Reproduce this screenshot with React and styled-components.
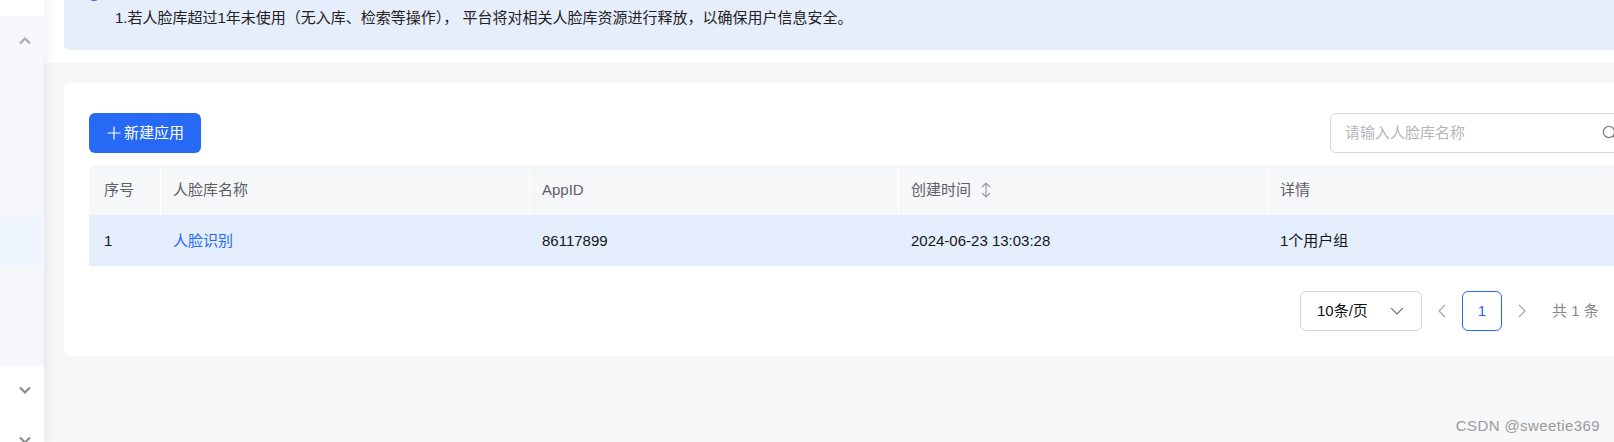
import React from "react";
import styled, { createGlobalStyle } from "styled-components";

const Global = createGlobalStyle`
  html, body { margin: 0; padding: 0; width: 1614px; height: 442px; overflow: hidden; background: #f6f7f9; }
  * { box-sizing: border-box; }
  body { font-family: "Liberation Sans", "Noto Sans CJK SC", sans-serif; font-size: 15px; line-height: 20px; color: #161616; }
`;

const Page = styled.div`
  position: relative;
  display: flex;
  width: 1614px;
  height: 442px;
  overflow: hidden;
`;
const Sidebar = styled.aside`
  width: 44px;
  flex: none;
  display: flex;
  flex-direction: column;
  background: #fff;
  box-shadow: 3px 0 12px rgba(0, 0, 0, 0.07);
  z-index: 1;
`;
const SideGroup = styled.div`
  height: 350px;
  flex: none;
  margin-top: 16px;
  background: linear-gradient(#f6f7fb 0 200px, #f0f6ff 200px 250px, #f6f7fb 250px);
  display: flex;
  justify-content: center;
  padding: 19px 0 0 5px;
`;
const SideItem = styled.div`
  height: 50px;
  display: flex;
  justify-content: center;
  padding: 18px 0 0 5px;
  flex: none;
`;
const Main = styled.main`
  flex: none;
  width: 1700px;
  display: flex;
  flex-direction: column;
`;
const TopBand = styled.div`
  background: #fff;
  padding: 0 0 13px 20px;
`;
const Alert = styled.div`
  height: 50px;
  background: #e6eefc;
  border-radius: 0 0 5px 5px;
  padding-left: 23px;
  display: flex;
  color: #222;
  line-height: 36px;
  overflow: hidden;
`;
const AlertDot = styled.span`
  flex: none;
  width: 14px;
  height: 14px;
  border-radius: 50%;
  background: #2569f5;
  margin: -13px 14px 0 0;
`;
const Card = styled.section`
  margin: 20px 0 0 20px;
  height: 273px;
  background: #fff;
  border-radius: 6px;
  padding: 30px 0 0 25px;
`;
const Toolbar = styled.div`
  display: flex;
  justify-content: space-between;
  height: 40px;
  margin-bottom: 12px;
  width: 1546px;
`;
const AddButton = styled.button`
  width: 112px;
  height: 40px;
  border: 0;
  border-radius: 6px;
  background: #2569f5;
  color: #fff;
  font: inherit;
  display: flex;
  align-items: center;
  justify-content: center;
  gap: 3px;
  padding: 0 0 0 1px;
`;
const Search = styled.div`
  width: 305px;
  height: 40px;
  border: 1px solid #d4d5d9;
  border-radius: 6px;
  display: flex;
  align-items: center;
  justify-content: space-between;
  padding: 0 16px 0 14px;
  color: #b4b6bb;
`;
const Row = styled.div`
  display: grid;
  grid-template-columns: 71px 369px 369px 369px 400px;
  width: 1620px;
  height: ${(p) => p.$h}px;
  background: ${(p) => p.$bg};
  align-items: center;
  border-radius: ${(p) => p.$r || 0};
`;
const HeadCell = styled.div`
  height: 100%;
  display: flex;
  align-items: center;
  gap: 9px;
  padding-left: ${(p) => (p.$first ? 15 : 12)}px;
  color: #5e6066;
  border-left: ${(p) => (p.$first ? 0 : "1px solid #fff")};
`;
const BodyCell = styled.div`
  padding-left: ${(p) => (p.$first ? 15 : 13)}px;
  color: #161616;
`;
const Link = styled.a`
  color: #2569f5;
`;
const Pager = styled.div`
  display: flex;
  align-items: center;
  margin-top: 25px;
  margin-left: 1211px;
  height: 39px;
`;
const PageSize = styled.div`
  width: 122px;
  height: 40px;
  border: 1px solid #d4d5d9;
  border-radius: 6px;
  display: flex;
  align-items: center;
  justify-content: space-between;
  padding: 0 17px 0 16px;
  color: #111;
`;
const PagerArrow = styled.span`
  display: flex;
  width: 40px;
  justify-content: center;
  color: #a8aab0;
`;
const PageNum = styled.div`
  width: 40px;
  height: 40px;
  border: 1px solid #2569f5;
  border-radius: 6px;
  display: flex;
  align-items: center;
  justify-content: center;
  color: #2569f5;
`;
const Total = styled.span`
  margin-left: 10px;
  color: #85878c;
`;
const Watermark = styled.div`
  position: absolute;
  right: 14px;
  top: 416px;
  color: #9a9a9a;
  font-size: 15px;
  letter-spacing: 0.4px;
`;

const Chevron = ({ up, color = "#8a8c92", size = 12, w = 2.2 }) => (
  <svg width={size} height={size} viewBox="0 0 12 12" fill="none">
    <path d={up ? "M1 8.5 6 3.5l5 5" : "M1 3.5l5 5 5-5"} stroke={color} strokeWidth={w} />
  </svg>
);
const Plus = () => (
  <svg width="14" height="14" viewBox="0 0 14 14">
    <path d="M7 0.5v13M0.5 7h13" stroke="#fff" strokeWidth="1.2" />
  </svg>
);
const SearchIcon = () => (
  <svg width="16" height="16" viewBox="0 0 16 16" fill="none" stroke="#7d7f85" strokeWidth="1.3">
    <circle cx="7" cy="7" r="5.6" />
    <path d="M11 11l4 4" />
  </svg>
);
const SortIcon = () => (
  <svg width="12" height="16" viewBox="0 0 12 16" fill="none" stroke="#9b9da3" strokeWidth="1.2">
    <path d="M6 1v14M2 5l4-4 4 4M2 11l4 4 4-4" />
  </svg>
);
const Side = ({ dir }) => (
  <svg width="8" height="14" viewBox="0 0 8 14" fill="none" stroke="#a8aab0" strokeWidth="1.3">
    <path d={dir === "l" ? "M7 1 1 7l6 6" : "M1 1l6 6-6 6"} />
  </svg>
);

export default function App() {
  return (
    <Page>
      <Global />
      <Sidebar>
        <SideGroup>
          <Chevron up color="#aaacb0" />
        </SideGroup>
        <SideItem>
          <Chevron />
        </SideItem>
        <SideItem>
          <Chevron />
        </SideItem>
      </Sidebar>
      <Main>
        <TopBand>
          <Alert>
            <AlertDot />
            <span>1.若人脸库超过1年未使用（无入库、检索等操作）， 平台将对相关人脸库资源进行释放，以确保用户信息安全。</span>
          </Alert>
        </TopBand>
        <Card>
          <Toolbar>
            <AddButton>
              <Plus />
              新建应用
            </AddButton>
            <Search>
              请输入人脸库名称
              <SearchIcon />
            </Search>
          </Toolbar>
          <Row $h={50} $bg="#f6f7f9" $r="6px 0 0 0">
            <HeadCell $first>序号</HeadCell>
            <HeadCell>人脸库名称</HeadCell>
            <HeadCell>AppID</HeadCell>
            <HeadCell>
              创建时间
              <SortIcon />
            </HeadCell>
            <HeadCell>详情</HeadCell>
          </Row>
          <Row $h={51} $bg="#e4eefd">
            <BodyCell $first>1</BodyCell>
            <BodyCell>
              <Link>人脸识别</Link>
            </BodyCell>
            <BodyCell>86117899</BodyCell>
            <BodyCell>2024-06-23 13:03:28</BodyCell>
            <BodyCell>1个用户组</BodyCell>
          </Row>
          <Pager>
            <PageSize>
              10条/页
              <Chevron color="#6f7177" size={14} w={1.1} />
            </PageSize>
            <PagerArrow>
              <Side dir="l" />
            </PagerArrow>
            <PageNum>1</PageNum>
            <PagerArrow>
              <Side dir="r" />
            </PagerArrow>
            <Total>共 1 条</Total>
          </Pager>
        </Card>
      </Main>
      <Watermark>CSDN @sweetie369</Watermark>
    </Page>
  );
}
